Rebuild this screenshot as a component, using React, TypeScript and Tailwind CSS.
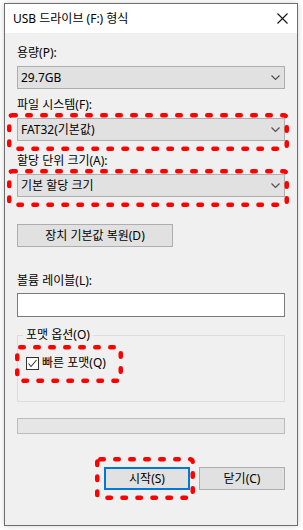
import React from "react";

const Chevron = () => (
  <svg width="9" height="5" viewBox="0 0 9 5" className="shrink-0">
    <polyline points="0.5,0.5 4.5,4.5 8.5,0.5" fill="none" stroke="#4d4d4d" strokeWidth="1.1" />
  </svg>
);

function Combo({ value }: { value: string }) {
  return (
    <div className="h-[23px] w-full flex items-center justify-between bg-[#e1e1e1] border border-[#adadad] pl-[3px] pr-[4px]">
      <span className="leading-[16px]">{value}</span>
      <Chevron />
    </div>
  );
}

function Label({ text, className = "" }: { text: string; className?: string }) {
  return <div className={`h-[16px] leading-[16px] ${className}`}>{text}</div>;
}

// red hand-drawn annotation boxes laid over the dialog
function DashBox({ className, w, h }: { className: string; w: number; h: number }) {
  return (
    <svg className={`absolute pointer-events-none ${className}`} width={w} height={h} viewBox={`0 0 ${w} ${h}`}>
      <rect
        x="2.25"
        y="2.25"
        width={w - 4.5}
        height={h - 4.5}
        rx="3"
        fill="none"
        stroke="#ff0000"
        strokeWidth="4.5"
        strokeLinecap="round"
        strokeDasharray="3.5 11.5"
      />
    </svg>
  );
}

export default function App() {
  return (
    <div className="relative w-[303px] h-[530px] bg-white overflow-hidden text-[12px] text-black font-['Noto_Sans','Noto_Sans_CJK_KR',sans-serif]">
      {/* Window */}
      <div className="ml-[4px] mt-[3px] w-[294px] h-[523px] border border-[#6e6e6e] bg-[#f0f0f0] flex flex-col shadow-[0_0_6px_rgba(0,0,0,0.18)]">
        {/* Title bar */}
        <div className="h-[29px] bg-white flex items-center justify-between pl-[8px] pr-[9px] shrink-0">
          <span className="leading-[16px]">USB 드라이브 (F:) 형식</span>
          <svg width="11" height="11" viewBox="0 0 11 11">
            <path d="M0.5 0.5 L10.5 10.5 M10.5 0.5 L0.5 10.5" stroke="#111" strokeWidth="1.1" />
          </svg>
        </div>

        {/* Body */}
        <div className="flex flex-col px-[12px]">
          <Label text="용량(P):" className="mt-[12px]" />
          <div className="mt-[5px]">
            <Combo value="29.7GB" />
          </div>

          <Label text="파일 시스템(F):" className="mt-[8px]" />
          <div className="mt-[5px]">
            <Combo value="FAT32(기본값)" />
          </div>

          <Label text="할당 단위 크기(A):" className="mt-[12px]" />
          <div className="mt-[5px]">
            <Combo value="기본 할당 크기" />
          </div>

          <button className="mt-[27px] w-[156px] h-[23px] bg-[#e1e1e1] border border-[#adadad] flex items-center justify-center leading-[16px]">
            장치 기본값 복원(D)
          </button>

          <Label text="볼륨 레이블(L):" className="mt-[26px]" />
          <div className="mt-[4px] h-[24px] bg-white border border-[#7a7a7a]" />

          <fieldset className="mt-[10px] border border-[#dcdcdc] pl-[8px] pt-[13px] pb-[31px]">
            <legend className="ml-[-3px] px-[3px] leading-[16px]">포맷 옵션(O)</legend>
            <div className="flex items-center gap-[3px] h-[14px]">
              <div className="w-[13px] h-[13px] bg-white border border-[#333] flex items-center justify-center">
                <svg width="11" height="11" viewBox="0 0 11 11">
                  <polyline points="1.5,5.5 4,8.5 9.5,2" fill="none" stroke="#333" strokeWidth="1.1" />
                </svg>
              </div>
              <span className="leading-[16px]">빠른 포맷(Q)</span>
            </div>
          </fieldset>

          <div className="mt-[16px] h-[16px] bg-[#e6e6e6] border border-[#bcbcbc]" />

          <div className="mt-[33px] flex justify-end gap-[9px]">
            <button className="w-[86px] h-[23px] bg-[#e1e1e1] border-2 border-[#0078d7] flex items-center justify-center leading-[16px]">
              시작(S)
            </button>
            <button className="w-[86px] h-[23px] bg-[#e1e1e1] border border-[#adadad] flex items-center justify-center leading-[16px]">
              닫기(C)
            </button>
          </div>
        </div>
      </div>

      <DashBox className="left-[7px] top-[113px]" w={282} h={38} />
      <DashBox className="left-[7px] top-[169px]" w={282} h={38} />
      <DashBox className="left-[15px] top-[345px]" w={108} h={38} />
      <DashBox className="left-[95px] top-[457px]" w={100} h={43} />
    </div>
  );
}
